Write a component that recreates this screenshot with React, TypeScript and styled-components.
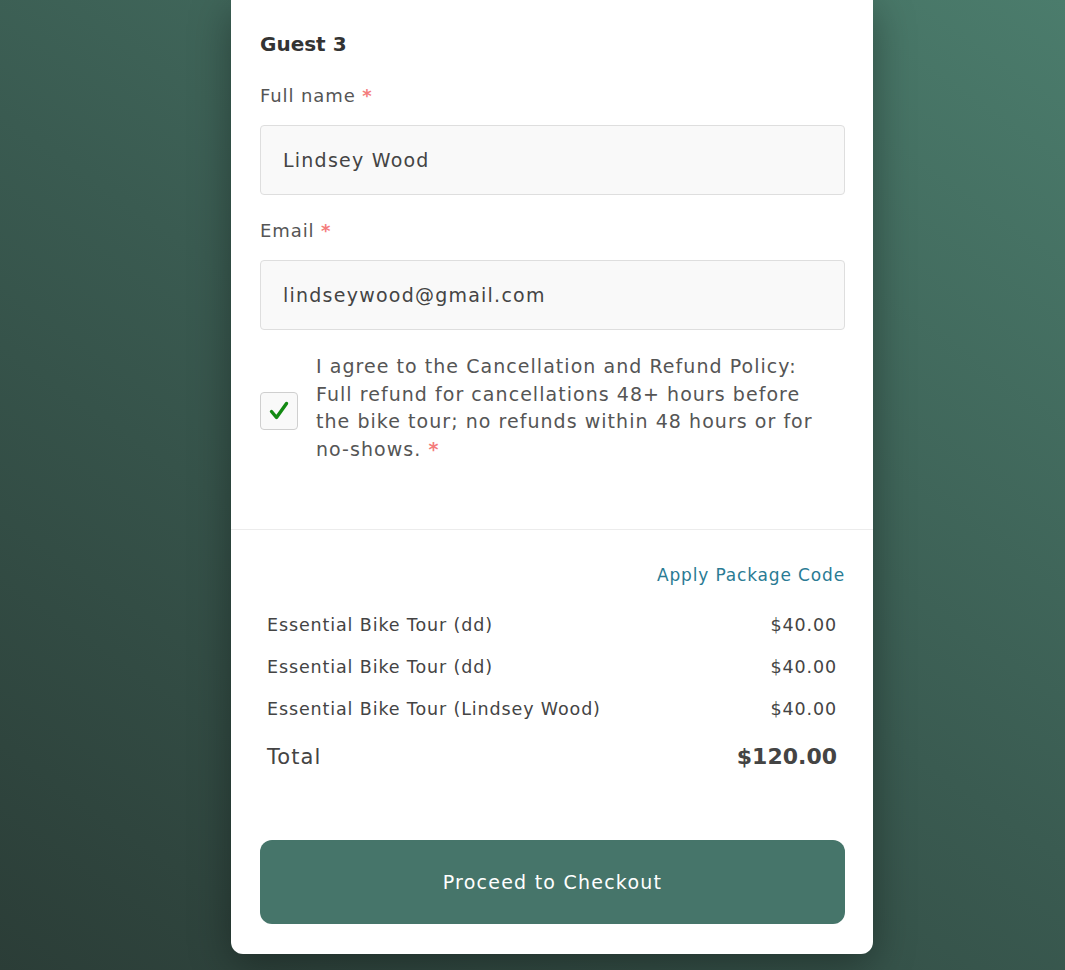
import React from "react";
import styled, { createGlobalStyle } from "styled-components";

const Global = createGlobalStyle`
  html, body { margin: 0; padding: 0; }
  body {
    font-family: "DejaVu Sans", "Open Sans", sans-serif;
    background: linear-gradient(35deg, #2b3d37 0%, #3a5b51 50%, #4b7c6c 100%);
    min-height: 970px;
    overflow: hidden;
  }
`;

const Page = styled.div`
  display: flex;
  justify-content: center;
  padding: 0 0 17px 39px;
  min-height: 970px;
  box-sizing: border-box;
`;

const Card = styled.div`
  width: 642px;
  background: #fff;
  border-radius: 0 0 12px 12px;
  box-shadow: 0 10px 40px rgba(0, 0, 0, 0.35);
  align-self: flex-start;
`;

const GuestSection = styled.section`
  padding: 32px 28px 65px 29px;
  border-bottom: 1px solid #ececec;
`;

const Heading = styled.h3`
  margin: 0 0 28px;
  font-size: 20px;
  line-height: 24px;
  font-weight: 700;
  color: #333;
`;

const Label = styled.label`
  display: block;
  font-size: 18px;
  line-height: 24px;
  letter-spacing: 0.05em;
  color: #555;
  margin-bottom: 17px;
`;

const Required = styled.span`
  color: #f47c7c;
  font-weight: 700;
`;

const Input = styled.input<{ $mb?: number }>`
  display: block;
  width: 100%;
  box-sizing: border-box;
  height: 70px;
  padding: 0 22px;
  background: #f9f9f9;
  border: 1px solid #dedede;
  border-radius: 4px;
  font-family: inherit;
  font-size: 19px;
  letter-spacing: 0.065em;
  color: #444;
  margin-bottom: ${(p) => p.$mb ?? 24}px;
  outline: none;
`;

const AgreeRow = styled.div`
  display: flex;
  align-items: center;
  gap: 18px;
`;

const CheckBox = styled.span`
  flex: 0 0 auto;
  width: 38px;
  height: 38px;
  box-sizing: border-box;
  border: 1px solid #cfcfcf;
  border-radius: 4px;
  background: #f9f9f9;
  display: flex;
  align-items: center;
  justify-content: center;
  margin-top: 5px;
`;

const AgreeText = styled.p`
  margin: 0;
  font-size: 19px;
  line-height: 27.7px;
  letter-spacing: 0.055em;
  color: #555;
  max-width: 500px;
`;

const Summary = styled.section`
  padding: 34px 28px 30px 29px;
`;

const LinkRow = styled.div`
  display: flex;
  justify-content: flex-end;
  margin-bottom: 18px;
`;

const PackageLink = styled.a`
  font-size: 17px;
  line-height: 22px;
  letter-spacing: 0.05em;
  color: #2a7b94;
  text-decoration: none;
  cursor: pointer;
`;

const Row = styled.div<{ $total?: boolean }>`
  display: flex;
  justify-content: space-between;
  align-items: center;
  padding: 0 8px 0 7px;
  height: ${(p) => (p.$total ? 50 : 42)}px;
  margin-top: ${(p) => (p.$total ? 2 : 0)}px;
  font-size: ${(p) => (p.$total ? 21 : 17.5)}px;
  letter-spacing: 0.05em;
  color: #444;
`;

const Amount = styled.span<{ $bold?: boolean }>`
  font-weight: ${(p) => (p.$bold ? 700 : 400)};
  font-size: ${(p) => (p.$bold ? "22px" : "inherit")};
  letter-spacing: ${(p) => (p.$bold ? "0" : "inherit")};
`;

const CheckoutButton = styled.button`
  display: block;
  width: 100%;
  height: 84px;
  margin-top: 58px;
  border: none;
  border-radius: 12px;
  background: #46756a;
  color: #fff;
  font-family: inherit;
  font-size: 19px;
  letter-spacing: 0.065em;
  cursor: pointer;
`;

const items = [
  { name: "Essential Bike Tour (dd)", price: "$40.00" },
  { name: "Essential Bike Tour (dd)", price: "$40.00" },
  { name: "Essential Bike Tour (Lindsey Wood)", price: "$40.00" },
];

export default function App() {
  return (
    <>
      <Global />
      <Page>
        <Card>
          <GuestSection>
            <Heading>Guest 3</Heading>
            <Label>
              Full name <Required>*</Required>
            </Label>
            <Input defaultValue="Lindsey Wood" />
            <Label>
              Email <Required>*</Required>
            </Label>
            <Input defaultValue="lindseywood@gmail.com" $mb={23} />
            <AgreeRow>
              <CheckBox>
                <svg width="22" height="22" viewBox="0 0 22 22" fill="none">
                  <path
                    d="M3.5 11.5 L8.5 17.5 L18.5 3.5"
                    stroke="#138a13"
                    strokeWidth="3.4"
                    strokeLinecap="round"
                    strokeLinejoin="round"
                  />
                </svg>
              </CheckBox>
              <AgreeText>
                I agree to the Cancellation and Refund Policy: Full refund for
                cancellations 48+ hours before the bike tour; no refunds within
                48 hours or for no-shows. <Required>*</Required>
              </AgreeText>
            </AgreeRow>
          </GuestSection>
          <Summary>
            <LinkRow>
              <PackageLink>Apply Package Code</PackageLink>
            </LinkRow>
            {items.map((it, i) => (
              <Row key={i}>
                <span>{it.name}</span>
                <Amount>{it.price}</Amount>
              </Row>
            ))}
            <Row $total>
              <span>Total</span>
              <Amount $bold>$120.00</Amount>
            </Row>
            <CheckoutButton>Proceed to Checkout</CheckoutButton>
          </Summary>
        </Card>
      </Page>
    </>
  );
}
